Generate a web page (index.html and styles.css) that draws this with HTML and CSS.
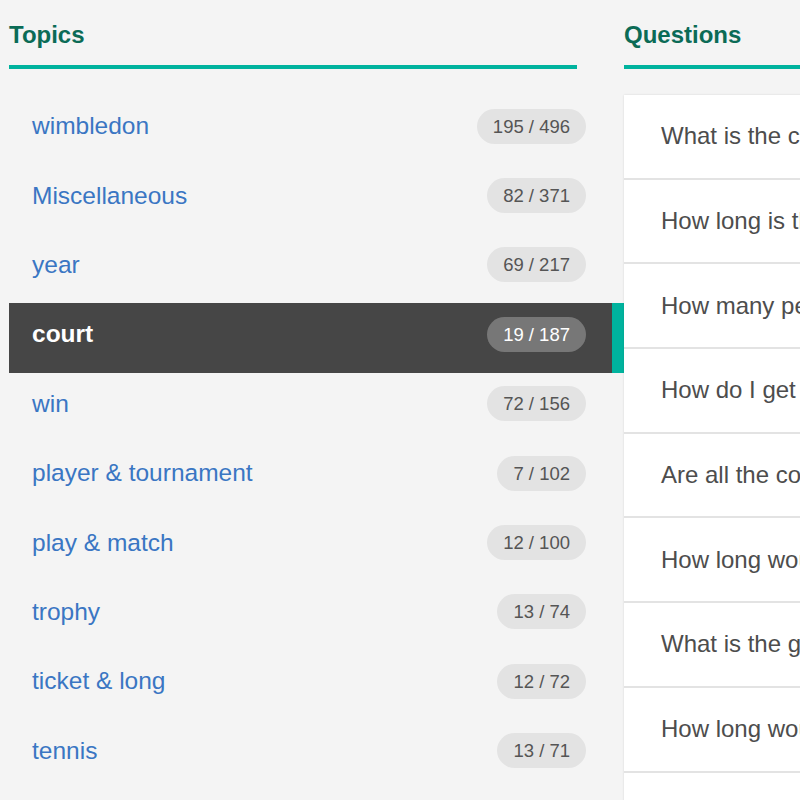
FILE: index.html
```html
<!DOCTYPE html>
<html lang="en">
<head>
<meta charset="utf-8">
<title>Topics</title>
<link rel="stylesheet" href="styles.css">
</head>
<body>
<div class="page">
  <section class="topics">
    <h2 class="heading heading-topics">Topics</h2>
    <ul class="topic-list">
      <li class="topic"><a class="topic-name">wimbledon</a><span class="badge">195 / 496</span></li>
      <li class="topic"><a class="topic-name">Miscellaneous</a><span class="badge">82 / 371</span></li>
      <li class="topic"><a class="topic-name">year</a><span class="badge">69 / 217</span></li>
      <li class="topic active"><a class="topic-name">court</a><span class="badge">19 / 187</span></li>
      <li class="topic"><a class="topic-name">win</a><span class="badge">72 / 156</span></li>
      <li class="topic"><a class="topic-name">player &amp; tournament</a><span class="badge">7 / 102</span></li>
      <li class="topic"><a class="topic-name">play &amp; match</a><span class="badge">12 / 100</span></li>
      <li class="topic"><a class="topic-name">trophy</a><span class="badge">13 / 74</span></li>
      <li class="topic"><a class="topic-name">ticket &amp; long</a><span class="badge">12 / 72</span></li>
      <li class="topic"><a class="topic-name">tennis</a><span class="badge">13 / 71</span></li>
    </ul>
  </section>
  <section class="questions">
    <h2 class="heading">Questions</h2>
    <ul class="question-list">
      <li class="question">What is the capacity of Centre Court?</li>
      <li class="question">How long is the Wimbledon fortnight?</li>
      <li class="question">How many people can watch on the Hill?</li>
      <li class="question">How do I get tickets for Centre Court?</li>
      <li class="question">Are all the courts made of grass?</li>
      <li class="question">How long would I have to queue?</li>
      <li class="question">What is the ground pass?</li>
      <li class="question">How long would a match last?</li>
      <li class="question">When does the roof close?</li>
    </ul>
  </section>
</div>
</body>
</html>
```

FILE: styles.css
```css
html, body {
  margin: 0;
  padding: 0;
  overflow: hidden;
  height: 800px;
  background: #f4f4f4;
  font-family: "Liberation Sans", Arial, sans-serif;
}

.page {
  display: flex;
  align-items: flex-start;
  padding-left: 9px;
  width: 1200px;
}

.topics {
  flex: none;
  width: 615px;
}

.questions {
  flex: none;
  width: 500px;
}

.heading {
  margin: 0;
  padding: 21px 0 16px;
  font-size: 24px;
  line-height: 28px;
  font-weight: bold;
  color: #0b6b56;
  border-bottom: 4px solid #00b39e;
}

.heading-topics {
  margin-right: 47px;
}

.topic-list,
.question-list {
  list-style: none;
  margin: 26px 0 0;
  padding: 0;
}

.topic {
  box-sizing: border-box;
  height: 69.4px;
  display: flex;
  align-items: center;
  justify-content: space-between;
  padding: 0 38px 7px 23px;
}

.topic-name {
  font-size: 24.5px;
  color: #3a76c3;
}

.badge {
  box-sizing: border-box;
  height: 35px;
  padding: 0 16px;
  border-radius: 18px;
  background: #e3e3e3;
  color: #555;
  font-size: 18.5px;
  line-height: 35px;
}

.topic.active {
  background: #464646;
  border-right: 12px solid #00b39e;
  padding-right: 26px;
}

.topic.active .topic-name {
  color: #fff;
  font-weight: bold;
}

.topic.active .badge {
  background: #777;
  color: #fff;
}

.question-list {
  background: #fff;
  box-shadow: 0 0 2px rgba(0, 0, 0, 0.12);
}

.question {
  box-sizing: border-box;
  height: 84.7px;
  display: flex;
  align-items: center;
  padding-left: 37px;
  border-bottom: 2px solid #e3e3e3;
  font-size: 24px;
  color: #4d4d4d;
  white-space: nowrap;
}
```
